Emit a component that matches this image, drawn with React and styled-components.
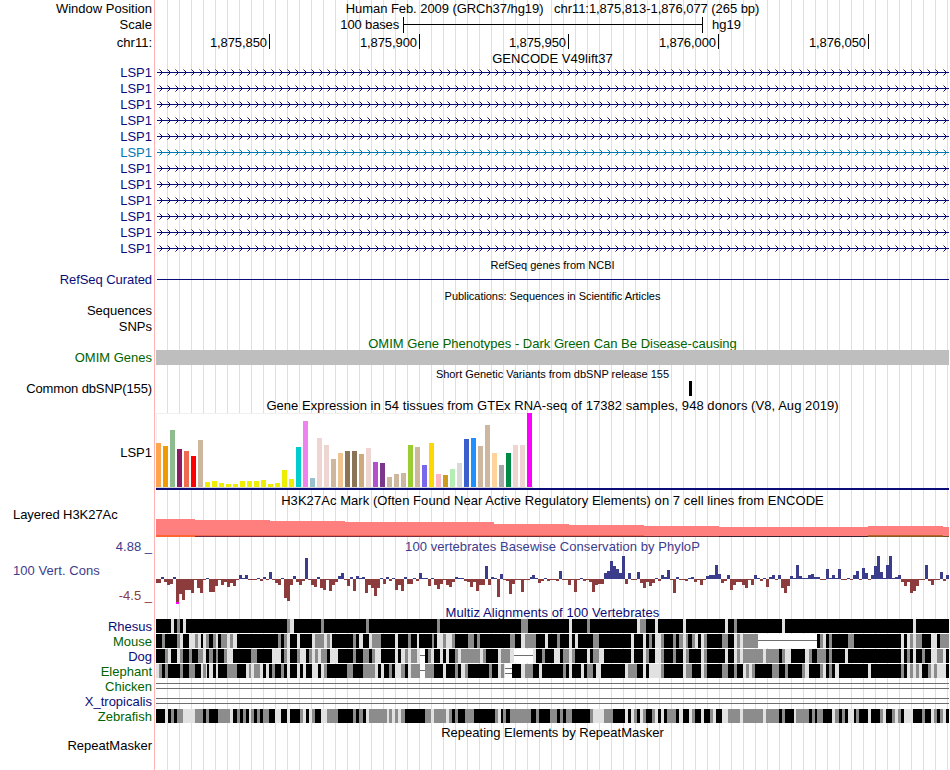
import React from "react";
import styled, { createGlobalStyle } from "styled-components";

const NAVY = "#0c0c78";
const GREEN = "#006400";
const BLUE = "#3c3c8c";
const BROWN = "#8c3c3c";
const TRACK_WIDTH = 793;

const tissues = [
  [44, "#ffa54f"], [41, "#ee9a00"], [57, "#8fbc8f"], [38, "#8b1c62"], [36, "#ee6a50"], [31, "#ff0000"],
  [47, "#cdb79e"], [5, "#eeee00"], [6, "#eeee00"], [4, "#eeee00"], [3, "#eeee00"], [3, "#eeee00"],
  [6, "#eeee00"], [6, "#eeee00"], [6, "#eeee00"], [7, "#eeee00"], [3, "#eeee00"], [4, "#eeee00"],
  [17, "#eeee00"], [8, "#eeee00"], [40, "#00cdcd"], [66, "#ee82ee"], [9, "#9ac0cd"], [49, "#eed5d2"],
  [42, "#eed5d2"], [28, "#cdb79e"], [34, "#eec591"], [36, "#8b7355"], [36, "#8b7355"], [33, "#cdaa7d"],
  [39, "#eed5d2"], [25, "#b452cd"], [24, "#7a378b"], [10, "#cdb79e"], [13, "#cdb79e"], [14, "#cdb79e"],
  [42, "#9acd32"], [40, "#cdb79e"], [22, "#7a67ee"], [44, "#ffd700"], [13, "#ffb6c1"], [12, "#cd9b1d"],
  [18, "#b4eeb4"], [24, "#d9d9d9"], [48, "#3a5fcd"], [49, "#1e90ff"], [41, "#cdb79e"], [62, "#cdb79e"],
  [34, "#ffd39b"], [22, "#a6a6a6"], [34, "#008b45"], [42, "#eed5d2"], [42, "#eed5d2"], [74, "#ff00ff"],
];

// x, width, height above the baseline, baseline colours
const h3k27ac = [
  [0, 39, 18, "#ff6433", "#ff6433"],
  [39, 75, 17, "#f06450", "#7a2c40"],
  [114, 75, 16, "#f06450", "#7a2c40"],
  [189, 149, 15, "#f06450", "#7a2c40"],
  [338, 75, 13, "#f06450", "#6e3038"],
  [413, 75, 12, "#f06450", "#6e3038"],
  [488, 75, 11, "#ff7e7e", "#6e3038"],
  [563, 149, 10, "#ff7e7e", "#3c2030"],
  [712, 75, 11, "#b86428", "#8a5a28"],
  [787, 6, 10, "#ff7e7e", "#6e5028"],
];

// one score per base
const phyloP = [
  -4, -4, 2, -3, -6, -5, 2, -25, -15, -21, -11, -11, -14, -1, -9, -14, -1, 1, -13, -13,
  -7, -1, -6, -3, -8, -4, -7, -1, 4, 1, 4, -1, -1, -1, 1, -2, 2, -1, 7, -1,
  -4, -6, 1, -19, -22, -6, 3, -3, -6, -2, 21, -1, -6, -8, 2, -9, -11, -1, -12, -6,
  -3, 3, 6, -1, -7, 2, -12, 3, 1, 2, -14, -6, -9, -17, -9, 1, -5, 2, -2, 1,
  -11, -6, -12, 2, -5, -5, 1, -2, 6, 1, 1, -7, 1, -6, -10, -5, -1, -6, -8, -3,
  2, 1, 1, -2, -3, -8, -3, -12, -6, -6, 13, -6, 2, 1, -18, 5, -1, -2, -15, -5,
  -1, -1, -13, -1, -1, 2, 4, 1, -4, -2, 1, -2, -1, -1, -2, 8, -1, -1, -6, -1,
  -13, -1, 1, -2, -1, -3, -13, -6, -5, -5, 6, 8, 18, 13, 10, 6, 23, -5, 6, -1,
  -1, 7, -4, -9, -3, -7, -4, 1, -2, 4, 2, 9, -1, -14, 2, -1, -1, -2, 1, 2,
  -3, -1, -6, -1, 3, 4, 4, 14, 5, -4, -2, 4, -11, -6, -3, -3, -6, -9, -1, -6,
  4, 1, -2, 1, -8, 2, 4, -1, 4, -9, -14, -7, 3, 1, 14, 3, 1, 1, 4, 5,
  2, 2, -1, -1, 10, 1, 4, 1, 10, -1, -1, 1, -1, 4, 8, -1, 11, 6, -1, 4,
  13, 23, 7, 1, 14, 23, 1, 2, 4, -3, -7, -3, -14, -12, -7, -1, -1, 14, -2, -6,
  -1, -1, 7, -2, 4,
];

// L = light, G = gray, W = unaligned (single line), D = unaligned (double line)
const species = [
  {
    name: "Rhesus",
    color: NAVY,
    blocks:
      "L15,3 G21,3 L27,3 G131,3 L134,4 G165,3 G210,3 G281,3 G365,7 L413,3 G431,3 L481,3 G484,6 L499,3 L527,3 L569,3 G578,3 L626,3 L757,3",
  },
  {
    name: "Mouse",
    color: GREEN,
    blocks:
      "G6,3 G21,3 L24,3 L33,6 G39,3 L42,3 L47,3 G50,3 G57,3 L60,2 G65,6 L71,3 G74,3 L77,4 G122,3 G128,3 L131,3 L141,3 L156,3 G159,9 L168,3 G171,3 L174,2 " +
      "G197,3 L203,4 L213,3 G216,9 L239,3 G252,3 L261,2 G276,2 L281,6 G287,3 L290,6 G296,3 G312,6 G321,3 G354,5 L365,4 G369,11 L389,3 " +
      "G401,3 L413,3 L419,3 G437,6 L475,3 L487,3 G493,3 L499,6 G505,3 G517,3 G523,4 L527,3 G530,2 G536,3 L539,3 L545,3 G548,3 G566,6 L578,3 G581,3 L584,3 G587,15 " +
      "W602,59 G664,3 L667,3 G673,3 G692,6 L745,3 L751,3 G754,3 L757,3 G760,6 L775,6 G784,9",
  },
  {
    name: "Dog",
    color: NAVY,
    blocks:
      "G9,3 L12,3 L21,3 G24,3 G33,3 G42,5 L47,3 G53,4 G60,2 G68,3 L71,6 G95,6 L116,9 G128,3 L131,3 G141,3 L144,6 G153,3 L156,3 G159,3 L162,3 G165,6 L174,8 " +
      "G197,3 G207,6 G216,3 L219,6 L239,3 L245,4 G249,3 L252,3 G255,6 L261,3 W264,5 G272,3 L275,3 L284,3 L290,3 G299,3 L302,3 G305,19 L324,3 G327,3 L342,3 G345,9 L354,4 W358,19 L377,3 G386,3 " +
      "L398,6 G407,6 L413,3 G416,3 L431,3 G437,6 L443,5 L475,3 L487,3 G490,3 L499,6 G505,3 G517,3 L527,3 G530,3 L545,3 G548,3 L569,3 L578,3 G581,3 L584,3 G587,20 " +
      "L607,3 G610,13 G626,3 L629,6 L649,4 G653,3 G661,9 G673,3 L689,3 L745,3 G751,3 L757,3 G766,3 L775,6 G781,6 L787,3",
  },
  {
    name: "Elephant",
    color: GREEN,
    blocks:
      "L0,3 G3,3 G9,3 G24,3 G33,6 L45,2 G47,3 L50,1 L53,4 L60,2 G71,10 L90,3 G93,2 L95,3 G98,6 L104,3 L110,3 G116,3 G125,3 L131,3 L141,3 L147,3 L156,6 L165,3 G168,3 G191,6 " +
      "G207,12 L219,3 L225,3 G233,3 L239,6 G245,4 L252,3 G255,9 W264,5 G269,9 L287,3 G299,3 L305,4 G309,3 G333,3 L342,3 G345,3 L348,1 D349,7 L365,4 G369,8 L383,3 " +
      "G407,3 L413,3 L425,3 G431,6 L440,5 L469,3 G472,9 L487,3 L493,12 G505,3 L527,3 G530,6 L545,3 G548,3 G566,6 G578,3 L587,3 G590,3 L593,3 " +
      "G596,3 G616,7 G629,3 G646,3 L649,4 G664,3 L667,3 G673,3 L679,4 L712,3 G745,3 L751,3 G754,3 L757,3 G760,3 L763,3 G772,3 L775,3 G778,3 L781,9",
  },
  { name: "Chicken", color: GREEN },
  { name: "X_tropicalis", color: NAVY },
  {
    name: "Zebrafish",
    color: GREEN,
    blocks:
      "L9,3 G15,3 G21,6 L27,12 G39,8 G50,3 G62,12 L74,3 G81,3 G87,3 L93,2 G95,3 G101,3 G107,6 L119,6 L131,3 G144,3 L147,3 L153,3 G156,3 L165,6 G171,11 " +
      "G197,3 G203,4 L210,3 G213,18 L231,2 G233,3 L236,3 G239,3 L242,3 G245,4 G269,6 L275,3 G278,12 L290,3 G293,3 G299,3 G309,9 G339,3 L342,3 G347,3 G354,21 G380,3 " +
      "G394,7 G404,3 G410,6 G434,3 L437,11 G448,9 L469,3 L475,3 G478,3 L484,3 G487,3 G496,3 L499,3 L505,3 G511,9 L523,4 L533,3 G536,3 L545,3 G554,3 L557,3 L566,6 G572,12 L584,3 G587,20 " +
      "L607,3 G610,13 G626,3 L638,2 G640,13 G656,3 G661,6 L676,3 G679,4 G686,3 L692,6 G700,3 L712,3 G724,3 L727,3 G736,3 L739,3 G742,3 L748,9 G766,3 L775,3 G778,3 G784,3 L787,3",
  },
];

const tones = { L: "#e1e1e1", G: "#8c8c8c", W: "#ffffff", D: "#ffffff" };

const GeneArrows = ({ color, id }) => (
  <SChart height="16">
    <defs>
      <pattern id={id} width="8" height="16" patternUnits="userSpaceOnUse">
        <path d="M4 6h1v1h1v1h1v1h-1v1h-1v1h-1v-1h1v-1h1v-1h-1v-1h-1z" fill={color} />
        <path d="M3 5h1v1h-1zM3 11h1v1h-1z" fill={color} opacity="0.5" />
      </pattern>
    </defs>
    <rect x="1" y="8" width="792" height="1" fill={color} />
    <rect x="1" width="792" height="16" fill={`url(#${id})`} />
  </SChart>
);

const ExpressionBars = () => (
  <SChart height="77">
    <rect width="377" height="75" fill="#ffffff" />
    <path d="M0.5 74V0.5H377" stroke="#f0f0f0" fill="none" />
    <rect y="74" width="377" height="1" fill="#d3d3d3" />
    {tissues.map(([h, fill], i) => (
      <rect key={i} x={i * 7} y={74 - h} width="5" height={h} fill={fill} />
    ))}
    <rect y="75" width={TRACK_WIDTH} height="2" fill={NAVY} />
  </SChart>
);

const LayeredMark = () => (
  <SChart height="29">
    {h3k27ac.map(([x, w, h, upper, lower]) => (
      <g key={x}>
        <rect x={x} y={29 - h} width={w} height={h} fill="#ff7e7e" />
        <rect x={x} y="27" width={w} height="1" fill={upper} />
        <rect x={x} y="28" width={w} height="1" fill={lower} />
      </g>
    ))}
  </SChart>
);

const Conservation = () => (
  <SChart height="50">
    {phyloP.map((score, i) => {
      const x = Math.max(0, Math.round(i * 2.996 - 1));
      const width = Math.round((i + 1) * 2.996 - 1) - x;
      const h = Math.abs(score);
      return (
        <rect key={i} x={x} y={score > 0 ? 24 - h : 24} width={width} height={h} fill={score > 0 ? BLUE : BROWN} />
      );
    })}
    <rect x="20" y="47" width="3" height="2" fill="#ff00ff" />
  </SChart>
);

const Alignment = ({ blocks }) => {
  if (!blocks) {
    return (
      <SChart height="15">
        <path d="M0 4.5H793M0 9.5H793" stroke="#6e6e6e" />
      </SChart>
    );
  }
  return (
    <SChart height="15">
      <rect width={TRACK_WIDTH} height="14" fill="#000000" />
      {blocks.split(" ").map((block) => {
        const tone = block[0];
        const [x, w] = block.slice(1).split(",").map(Number);
        return (
          <g key={block}>
            <rect x={x} width={w} height="14" fill={tones[tone]} />
            {tone === "W" && <rect x={x} y="6" width={w} height="1" fill="#6e6e6e" />}
            {tone === "D" && <path d={`M${x} 4.5h${w}M${x} 9.5h${w}`} stroke="#6e6e6e" />}
          </g>
        );
      })}
    </SChart>
  );
};

const Row = ({ label, color, height, spacing, labelTop, children }) => (
  <SRow $height={height}>
    <SLabel $color={color} $spacing={spacing} $top={labelTop}>
      {label}
    </SLabel>
    <STrack>{children}</STrack>
  </SRow>
);

const Title = ({ height = 16, label, labelColor, color, small, spacing, top, children }) => (
  <SRow $height={height}>
    <SLabel $color={labelColor}>{label}</SLabel>
    <STitle $color={color} $small={small} $spacing={spacing} $top={top}>
      {children}
    </STitle>
  </SRow>
);

const App = () => (
  <>
    <GlobalStyle />
    <SBrowser>
      <Title height={17} label="Window Position" spacing={-0.06}>
        {"Human Feb. 2009 (GRCh37/hg19)   chr11:1,875,813-1,876,077 (265 bp)"}
      </Title>
      <Row height={17} label="Scale" labelTop={-1}>
        <SScale>
          <SScaleText>100 bases</SScaleText>
          <SScaleBar />
          <span>hg19</span>
        </SScale>
      </Row>
      <Row height={16} label="chr11:">
        <SRuler>
          <STick $width={114}>1,875,850</STick>
          <STick $width={150}>1,875,900</STick>
          <STick $width={149}>1,875,950</STick>
          <STick $width={150}>1,876,000</STick>
          <STick $width={150}>1,876,050</STick>
        </SRuler>
      </Row>
      <Title height={14} top={1} spacing={0.04}>
        GENCODE V49lift37
      </Title>
      {Array.from({ length: 12 }, (_, i) => {
        const color = i === 5 ? "#0078b4" : NAVY;
        return (
          <Row key={i} height={16} label="LSP1" color={color}>
            <GeneArrows color={color} id={`arrows${i}`} />
          </Row>
        );
      })}
      <Title height={15} small top={2}>
        RefSeq genes from NCBI
      </Title>
      <Row height={16} label="RefSeq Curated" color={NAVY} spacing={-0.07}>
        <SGeneLine />
      </Row>
      <Title height={15} small top={2} spacing={-0.04}>
        Publications: Sequences in Scientific Articles
      </Title>
      <Row height={16} label="Sequences" />
      <Row height={16} label="SNPs" />
      <Title height={16} color={GREEN} top={1}>
        OMIM Gene Phenotypes - Dark Green Can Be Disease-causing
      </Title>
      <Row height={15} label="OMIM Genes" color={GREEN}>
        <SOmimBar />
      </Row>
      <Title height={16} small top={1}>
        Short Genetic Variants from dbSNP release 155
      </Title>
      <Row height={15} label="Common dbSNP(155)" spacing={-0.12}>
        <SVariant />
      </Row>
      <Title height={17} top={1} spacing={0.055}>
        Gene Expression in 54 tissues from GTEx RNA-seq of 17382 samples, 948 donors (V8, Aug 2019)
      </Title>
      <Row height={77} label="LSP1" labelTop={1}>
        <ExpressionBars />
      </Row>
      <Title height={18} top={1} spacing={0.06}>
        H3K27Ac Mark (Often Found Near Active Regulatory Elements) on 7 cell lines from ENCODE
      </Title>
      <SRow $height={29}>
        <SSideLabels>
          <SLeftLabel $spacing={-0.06}>Layered H3K27Ac</SLeftLabel>
        </SSideLabels>
        <STrack>
          <LayeredMark />
        </STrack>
      </SRow>
      <Title height={18} label="4.88 _" labelColor={BLUE} color={BLUE} spacing={0.06}>
        100 vertebrates Basewise Conservation by PhyloP
      </Title>
      <SRow $height={50}>
        <SSideLabels>
          <SLeftLabel $color={BLUE} $offset={9} $spacing={0.06}>
            100 Vert. Cons
          </SLeftLabel>
          <SRightLabel>-4.5 _</SRightLabel>
        </SSideLabels>
        <STrack>
          <Conservation />
        </STrack>
      </SRow>
      <Title height={14} color={NAVY} spacing={0.08}>
        Multiz Alignments of 100 Vertebrates
      </Title>
      {species.map(({ name, color, blocks }) => (
        <Row key={name} height={15} label={name} color={color}>
          <Alignment blocks={blocks} />
        </Row>
      ))}
      <Title height={16}>Repeating Elements by RepeatMasker</Title>
      <Row height={13} label="RepeatMasker" labelTop={-1} />
    </SBrowser>
  </>
);

export default App;

const GlobalStyle = createGlobalStyle`
  body {
    margin: 0;
    background: #ffffff;
  }
`;

const SBrowser = styled.main`
  width: 949px;
  height: 770px;
  overflow: hidden;
  color: #000000;
  font-family: "Liberation Sans", Arial, sans-serif;
  font-size: 13px;
  white-space: pre;
  background:
    linear-gradient(#ffb4b4, #ffb4b4) 154px 0 / 1px 100% no-repeat,
    repeating-linear-gradient(to right, #dcdcf8 0 1px, transparent 1px 12px) 167px 0 / 782px 100% no-repeat;
`;

const SRow = styled.div`
  display: grid;
  grid-template-columns: 156px ${TRACK_WIDTH}px;
  height: ${({ $height }) => $height}px;
`;

const SLabel = styled.div`
  display: flex;
  align-items: center;
  justify-content: flex-end;
  margin-top: ${({ $top }) => ($top || 0) * 2}px;
  padding-right: 4px;
  line-height: 15px;
  letter-spacing: ${({ $spacing }) => $spacing || 0}px;
  color: ${({ $color }) => $color || "inherit"};
`;

const STrack = styled.div`
  min-width: 0;
`;

const STitle = styled.div`
  display: flex;
  align-items: center;
  justify-content: center;
  margin-top: ${({ $top }) => $top || 0}px;
  margin-bottom: ${({ $top }) => -($top || 0)}px;
  line-height: 15px;
  font-size: ${({ $small }) => ($small ? 11 : 13)}px;
  letter-spacing: ${({ $spacing }) => $spacing || 0}px;
  color: ${({ $color }) => $color || "inherit"};
`;

const SChart = styled.svg`
  display: block;
  width: ${TRACK_WIDTH}px;
  shape-rendering: crispEdges;
`;

const SScale = styled.div`
  display: flex;
  height: 16px;
  line-height: 16px;
`;

const SScaleText = styled.span`
  width: 243px;
  margin-right: 4px;
  letter-spacing: -0.15px;
  text-align: right;
`;

const SScaleBar = styled.div`
  width: 298px;
  margin-right: 9px;
  border: solid #000000;
  border-width: 0 1px;
  background: linear-gradient(#000000, #000000) 0 7px / 100% 1px no-repeat;
`;

const SRuler = styled.div`
  display: flex;
`;

const STick = styled.div`
  box-sizing: border-box;
  width: ${({ $width }) => $width}px;
  height: 15px;
  padding-right: 2px;
  border-right: 1px solid #000000;
  line-height: 17px;
  letter-spacing: -0.08px;
  text-align: right;
`;

const SGeneLine = styled.div`
  height: 1px;
  margin: 8px 0 0 1px;
  background: ${NAVY};
`;

const SOmimBar = styled.div`
  height: 15px;
  background: #bebebe;
`;

const SVariant = styled.div`
  width: 3px;
  height: 15px;
  margin-left: 533px;
  background: #000000;
`;

const SSideLabels = styled.div`
  display: flex;
  flex-direction: column;
  justify-content: space-between;
  line-height: 14px;
`;

const SLeftLabel = styled.span`
  margin-top: ${({ $offset }) => $offset || 0}px;
  padding-left: 13px;
  letter-spacing: ${({ $spacing }) => $spacing || 0}px;
  color: ${({ $color }) => $color || "inherit"};
`;

const SRightLabel = styled.span`
  margin-bottom: 2px;
  padding-right: 4px;
  text-align: right;
  color: ${BROWN};
`;
